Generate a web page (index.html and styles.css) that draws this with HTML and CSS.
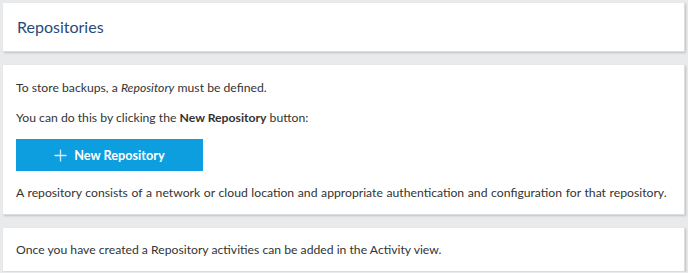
FILE: index.html
```html
<!DOCTYPE html>
<html>
<head>
<meta charset="utf-8">
<link rel="stylesheet" href="styles.css">
</head>
<body>
<div class="page">
  <section class="card card-header">
    <h1 class="title">Repositories</h1>
  </section>
  <section class="card card-body">
    <p class="text">To store backups, a <em>Repository</em> must be defined.</p>
    <p class="text">You can do this by clicking the <strong>New Repository</strong> button:</p>
    <button class="btn-primary" type="button">
      <svg class="btn-icon" width="13" height="13" viewBox="0 0 13 13" aria-hidden="true"><path d="M6.5 0.5v12M0.5 6.5h12" stroke="#cfeefb" stroke-width="1.3" fill="none"/></svg>
      <span>New Repository</span>
    </button>
    <p class="text text-long">A repository consists of a network or cloud location and appropriate authentication and configuration for that repository.</p>
  </section>
  <section class="card card-foot">
    <p class="text">Once you have created a Repository activities can be added in the Activity view.</p>
  </section>
</div>
</body>
</html>
```
FILE: styles.css
```css
html, body {
  margin: 0;
  padding: 0;
  background: #e9eaeb;
}
body {
  font-family: Lato, "Open Sans", sans-serif;
  color: #333;
  font-size: 12.2px;
}
.page {
  padding: 3px 3px 0 3px;
  display: flex;
  flex-direction: column;
  gap: 13px;
}
.card {
  background: #fff;
  box-shadow: 1px 1px 2px rgba(0,0,0,0.18);
  border-right: 1px solid #dcdcdc;
  border-bottom: 1px solid #dcdcdc;
}
.card-header {
  height: 49px;
  box-sizing: border-box;
  display: flex;
  align-items: center;
  padding: 0 13px 2px 14px;
}
.title {
  margin: 0;
  font-size: 16px;
  font-weight: 400;
  color: #254b7b;
}
.card-body {
  padding: 13px 13px 12px;
}
.text {
  margin: 0;
  line-height: 19px;
}
.text + .text {
  margin-top: 11px;
}
.text-long {
  word-spacing: 0.5px;
}
.btn-primary {
  display: flex;
  align-items: center;
  justify-content: center;
  gap: 7px;
  width: 187px;
  height: 32px;
  margin: 12px 0 12px;
  border: none;
  background: #0d9ee0;
  color: #fff;
  font-family: Lato, sans-serif;
  font-weight: 700;
  font-size: 12.7px;
  padding: 0;
  cursor: pointer;
}
.card-foot {
  padding: 12px 13px 12px;
}
```
